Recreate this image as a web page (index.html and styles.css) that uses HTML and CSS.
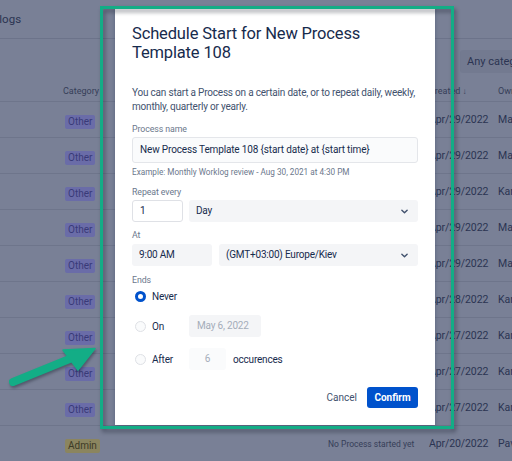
FILE: index.html
```html
<!DOCTYPE html>
<html lang="en">
<head>
<meta charset="utf-8">
<title>Schedule Start</title>
<link rel="stylesheet" href="styles.css">
</head>
<body>
<div class="page">
  <header class="topbar"><span class="crumb">Worklogs</span></header>
  <div class="toolbar"><div class="filter">Any category</div></div>
  <div class="list">
    <div class="row head">
      <span></span><span class="hcell">Category</span><span></span><span class="hcell">Created <span class="sort">&#8595;</span></span><span class="hcell">Owner</span>
    </div>
    <div class="row"><span></span><span><i class="badge other">Other</i></span><span></span><span class="date">Apr/29/2022</span><span class="owner">Mark</span></div>
    <div class="row"><span></span><span><i class="badge other">Other</i></span><span></span><span class="date">Apr/29/2022</span><span class="owner">Mark</span></div>
    <div class="row"><span></span><span><i class="badge other">Other</i></span><span></span><span class="date">Apr/29/2022</span><span class="owner">Karen</span></div>
    <div class="row"><span></span><span><i class="badge other">Other</i></span><span></span><span class="date">Apr/29/2022</span><span class="owner">Mark</span></div>
    <div class="row"><span></span><span><i class="badge other">Other</i></span><span></span><span class="date">Apr/29/2022</span><span class="owner">Mark</span></div>
    <div class="row"><span></span><span><i class="badge other">Other</i></span><span></span><span class="date">Apr/28/2022</span><span class="owner">Karen</span></div>
    <div class="row"><span></span><span><i class="badge other">Other</i></span><span></span><span class="date">Apr/27/2022</span><span class="owner">Karen</span></div>
    <div class="row"><span></span><span><i class="badge other">Other</i></span><span></span><span class="date">Apr/27/2022</span><span class="owner">Karen</span></div>
    <div class="row"><span></span><span><i class="badge other">Other</i></span><span></span><span class="date">Apr/27/2022</span><span class="owner">Karen</span></div>
    <div class="row"><span></span><span><i class="badge admin">Admin</i></span><span class="muted">No Process started yet</span><span class="date">Apr/20/2022</span><span class="owner">Pavel</span></div>
  </div>
</div>

<section class="dialog">
  <h1 class="title">Schedule Start for New Process Template 108</h1>
  <p class="desc">You can start a Process on a certain date, or to repeat daily, weekly, monthly, quarterly or yearly.</p>

  <div class="label">Process name</div>
  <div class="field text">New Process Template 108 {start date} at {start time}</div>
  <div class="hint">Example: Monthly Worklog review - Aug 30, 2021 at 4:30 PM</div>

  <div class="label gap">Repeat every</div>
  <div class="pair">
    <div class="field num">1</div>
    <div class="field select grow">Day
      <svg class="chev" viewBox="0 0 8 5"><path d="M1 1l3 3 3-3"/></svg>
    </div>
  </div>

  <div class="label gap-sm">At</div>
  <div class="pair wide">
    <div class="field select time">9:00 AM</div>
    <div class="field select grow">(GMT+03:00) Europe/Kiev
      <svg class="chev" viewBox="0 0 8 5"><path d="M1 1l3 3 3-3"/></svg>
    </div>
  </div>

  <div class="label gap">Ends</div>
  <div class="ends">
    <div class="opt first"><span class="radio on"></span><span class="opt-label">Never</span></div>
    <div class="opt second"><span class="radio"></span><span class="opt-label">On</span><div class="field select off date">May 6, 2022</div></div>
    <div class="opt third"><span class="radio"></span><span class="opt-label">After</span><div class="field select off count">6</div><span class="unit">occurences</span></div>
  </div>

  <div class="actions">
    <span class="cancel">Cancel</span>
    <span class="confirm">Confirm</span>
  </div>
</section>

<div class="frame"></div>
<svg class="arrow" viewBox="0 0 512 461">
  <line x1="13" y1="382" x2="72" y2="358"/>
  <polygon points="63,350 95,348.5 78,370"/>
</svg>
</body>
</html>
```

FILE: styles.css
```css
html, body {
  margin: 0;
  padding: 0;
}

body {
  position: relative;
  width: 512px;
  height: 461px;
  overflow: hidden;
  background: #798096;
  font-family: Roboto, "Liberation Sans", sans-serif;
  color: #2b3452;
}

/* ---------- page under the blanket ---------- */
.topbar {
  height: 38px;
  border-bottom: 1px solid #6c738a;
  display: flex;
  align-items: center;
}

.crumb {
  margin-left: -27px;
  font-size: 11.5px;
  color: #2b3452;
  white-space: nowrap;
}

.toolbar {
  height: 35px;
  box-sizing: border-box;
  padding: 11px 0 0 460px;
}

.filter {
  height: 23px;
  width: 90px;
  box-sizing: border-box;
  padding-left: 7px;
  background: #737a90;
  border-radius: 3px;
  font-size: 11px;
  line-height: 23px;
  color: #2b3452;
  white-space: nowrap;
}

.row {
  display: grid;
  grid-template-columns: 63px 265px 101px 69px 1fr;
  align-items: center;
  height: 36px;
  box-sizing: border-box;
  border-bottom: 1px solid #6e758b;
  white-space: nowrap;
}

.row.head {
  height: 28px;
  align-items: end;
  padding-bottom: 5px;
}

.hcell {
  font-size: 9px;
  color: #363e58;
}

.sort {
  font-size: 8px;
}

.badge {
  font-style: normal;
  display: inline-block;
  margin-left: 2px;
  padding: 0 3px;
  height: 14px;
  line-height: 14px;
  border-radius: 2px;
  font-size: 10px;
}

.badge.other {
  background: #6a6ca8;
  color: #393a78;
}

.badge.admin {
  background: #8b855f;
  color: #3c3a26;
}

.date {
  font-size: 10.5px;
  letter-spacing: -0.1px;
  color: #2b3452;
}

.owner {
  font-size: 10.5px;
}

.muted {
  font-size: 8.5px;
  color: #363e58;
}

/* ---------- modal ---------- */
.dialog {
  position: absolute;
  left: 115px;
  top: 8px;
  width: 320px;
  box-sizing: border-box;
  padding: 16px 17px 17px;
  background: #fff;
  box-shadow: 0 1px 4px rgba(9, 30, 66, 0.3);
  color: #172b4d;
}

.title {
  margin: 0;
  font-size: 16.5px;
  letter-spacing: -0.15px;
  line-height: 19px;
  font-weight: 400;
  color: #172b4d;
}

.desc {
  margin: 24px 0 0;
  font-size: 10px;
  letter-spacing: -0.2px;
  line-height: 14px;
  color: #42526e;
}

.label {
  margin-top: 9px;
  font-size: 8.8px;
  letter-spacing: -0.1px;
  line-height: 12px;
  color: #6b778c;
}

.label.gap {
  margin-top: 8px;
}

.label.gap-sm {
  margin-top: 7px;
}

.field {
  position: relative;
  box-sizing: border-box;
  height: 22px;
  padding-left: 7px;
  border-radius: 3px;
  background: #f4f5f7;
  font-size: 10px;
  letter-spacing: -0.2px;
  line-height: 22px;
  color: #172b4d;
  white-space: nowrap;
}

.field.text {
  margin-top: 2px;
  height: 26px;
  line-height: 24px;
  letter-spacing: -0.15px;
  border: 1px solid #e4e6ea;
  background: #fafbfc;
}

.hint {
  margin-top: 3px;
  font-size: 8.2px;
  line-height: 12px;
  color: #6b778c;
}

.pair {
  display: flex;
  gap: 6px;
  margin-top: 2px;
}

.pair.wide {
  gap: 7px;
  margin-top: 3px;
}

.field.num {
  width: 51px;
  background: #fff;
  border: 1px solid #dfe1e6;
  line-height: 20px;
}

.field.time {
  width: 80px;
}

.grow {
  flex: 1;
}

.chev {
  position: absolute;
  right: 10px;
  top: 9px;
  width: 7px;
  height: 5px;
  fill: none;
  stroke: #42526e;
  stroke-width: 1.6;
  stroke-linecap: round;
  stroke-linejoin: round;
}

.ends {
  margin-top: -1px;
}

.opt {
  display: flex;
  align-items: center;
  height: 22px;
  font-size: 10px;
  letter-spacing: -0.2px;
}

.opt.second {
  margin-top: 8px;
}

.opt.third {
  margin-top: 11px;
}

.radio {
  box-sizing: border-box;
  width: 11px;
  height: 11px;
  margin-left: 3px;
  margin-right: 6px;
  border-radius: 50%;
  border: 1.5px solid #dfe1e6;
  background: #fafbfc;
}

.radio.on {
  border: 3.5px solid #0052cc;
  background: #fff;
}

.opt-label {
  width: 37px;
  color: #172b4d;
}

.field.off {
  color: #a5adba;
}

.field.date {
  width: 72px;
  padding-left: 8px;
}

.field.count {
  width: 37px;
  padding: 0;
  text-align: center;
  background: #fafbfc;
}

.unit {
  margin-left: 7px;
  color: #172b4d;
}

.actions {
  display: flex;
  justify-content: flex-end;
  align-items: center;
  margin-top: 17px;
  gap: 10px;
}

.cancel {
  font-size: 10px;
  color: #42526e;
}

.confirm {
  width: 51px;
  height: 21px;
  line-height: 21px;
  text-align: center;
  border-radius: 3px;
  background: #0052cc;
  color: #fff;
  font-size: 10px;
  font-weight: 700;
}

/* ---------- callout annotations ---------- */
.frame {
  position: absolute;
  left: 100px;
  top: 6px;
  width: 354px;
  height: 423px;
  box-sizing: border-box;
  border: 3px solid #13ad86;
  filter: drop-shadow(2px 3px 2px rgba(20, 25, 40, 0.45));
}

.arrow {
  position: absolute;
  left: 0;
  top: 0;
  width: 512px;
  height: 461px;
  filter: drop-shadow(1px 2px 1.5px rgba(20, 25, 40, 0.4));
}

.arrow line {
  stroke: #13ad86;
  stroke-width: 8;
  stroke-linecap: round;
}

.arrow polygon {
  fill: #13ad86;
  stroke: #13ad86;
  stroke-width: 1.5;
  stroke-linejoin: round;
}
```
